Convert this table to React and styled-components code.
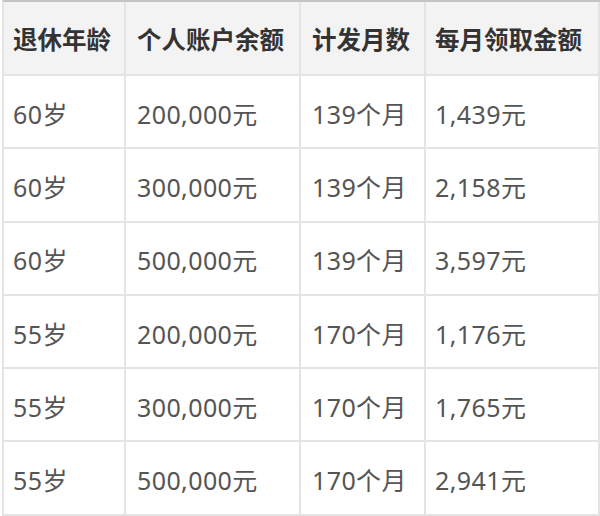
import React from 'react';
import styled, { createGlobalStyle } from 'styled-components';

const GlobalStyle = createGlobalStyle`
  *, *::before, *::after {
    box-sizing: border-box;
  }
  body {
    margin: 0;
    background: #fff;
    font-family: "Noto Sans", "Noto Sans CJK SC", sans-serif;
  }
`;

const Wrap = styled.div`
  width: 600px;
  height: 516px;
  padding: 0 2px;
  overflow: hidden;
`;

const Table = styled.table`
  width: 596px;
  border-collapse: separate;
  border-spacing: 0;
  border-top: 2px solid #c4c4c4;
  border-left: 2px solid #e4e4e4;
  table-layout: fixed;
`;

const HeadCell = styled.th`
  height: 74px;
  padding: 0 0 0 ${p => p.$pad || 11}px;
  background: #f3f3f3;
  border-right: 2px solid #e4e4e4;
  border-bottom: 2px solid #e4e4e4;
  color: #333;
  font-size: 24.5px;
  font-weight: 700;
  text-align: left;
  white-space: nowrap;
  vertical-align: middle;
`;

const Cell = styled.td`
  height: 73.3px;
  padding: 2px 0 0 ${p => p.$pad || 11}px;
  border-right: 2px solid #e4e4e4;
  border-bottom: 2px solid #e4e4e4;
  color: #555;
  font-size: 25px;
  letter-spacing: 0.4px;
  font-weight: 400;
  white-space: nowrap;
  vertical-align: middle;
`;

const columns = [
  { title: '退休年龄', width: 122, pad: 9 },
  { title: '个人账户余额', width: 175, pad: 11 },
  { title: '计发月数', width: 125, pad: 11 },
  { title: '每月领取金额', width: 174, pad: 9 },
];

const rows = [
  ['60岁', '200,000元', '139个月', '1,439元'],
  ['60岁', '300,000元', '139个月', '2,158元'],
  ['60岁', '500,000元', '139个月', '3,597元'],
  ['55岁', '200,000元', '170个月', '1,176元'],
  ['55岁', '300,000元', '170个月', '1,765元'],
  ['55岁', '500,000元', '170个月', '2,941元'],
];

const App = () => (
  <Wrap>
    <GlobalStyle />
    <Table>
      <colgroup>
        {columns.map(c => (
          <col key={c.title} style={{ width: c.width }} />
        ))}
      </colgroup>
      <thead>
        <tr>
          {columns.map(c => (
            <HeadCell key={c.title} $pad={c.pad}>
              {c.title}
            </HeadCell>
          ))}
        </tr>
      </thead>
      <tbody>
        {rows.map((row, i) => (
          <tr key={i}>
            {row.map((val, j) => (
              <Cell key={j} $pad={columns[j].pad}>
                {val}
              </Cell>
            ))}
          </tr>
        ))}
      </tbody>
    </Table>
  </Wrap>
);

export default App;
